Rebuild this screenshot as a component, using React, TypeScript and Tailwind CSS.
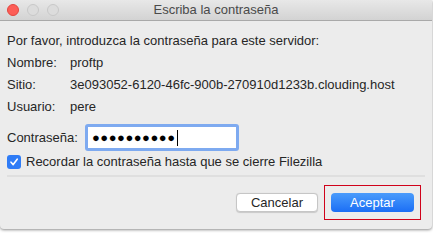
import React from "react";

const font = { fontFamily: '"Helvetica Neue", "Liberation Sans", Arial, sans-serif' };

function Row({ label, value }: { label: string; value: string }) {
  return (
    <div className="flex h-[22px] items-center">
      <span className="w-[63px] shrink-0">{label}</span>
      <span className="whitespace-nowrap">{value}</span>
    </div>
  );
}

export default function App() {
  return (
    <div className="h-[233px] w-[433px] overflow-hidden bg-white" style={font}>
      <div className="flex h-[229px] w-[432px] flex-col rounded-b-[4px] bg-[#ececec] text-[13px] text-[#262626] shadow-[0_1px_3px_rgba(0,0,0,0.45)]">
        {/* title bar */}
        <div className="relative flex h-[21px] shrink-0 items-center justify-center border-b border-[#a9a9a9] bg-gradient-to-b from-[#e8e8e8] to-[#d3d3d3]">
          <div className="absolute left-[7px] top-[4px] flex gap-[8px]">
            <span className="h-[12px] w-[12px] rounded-full border border-[#e2463f] bg-[#fd5d56]" />
            <span className="h-[12px] w-[12px] rounded-full border border-[#c8c8c8] bg-[#dcdcdc]" />
            <span className="h-[12px] w-[12px] rounded-full border border-[#c8c8c8] bg-[#dcdcdc]" />
          </div>
          <span className="text-[13px] text-[#4a4a4a]">Escriba la contraseña</span>
        </div>

        {/* body */}
        <div className="flex flex-col px-[7px] pt-[9px]">
          <div className="h-[22px] leading-[22px]">Por favor, introduzca la contraseña para este servidor:</div>
          <Row label="Nombre:" value="proftp" />
          <Row label="Sitio:" value="3e093052-6120-46fc-900b-270910d1233b.clouding.host" />
          <Row label="Usuario:" value="pere" />

          <div className="mt-[6px] flex items-center">
            <span className="w-[78px] shrink-0">Contraseña:</span>
            <div className="rounded-[3px] bg-[#7eaaf0] p-[3px]">
              <div className="flex h-[21px] w-[148px] items-center bg-white pl-[4px]">
                <span className="text-[13px] leading-none tracking-[0.5px] text-black">●●●●●●●●●●</span>
                <span className="ml-[1px] h-[16px] w-[1px] bg-black" />
              </div>
            </div>
          </div>

          <div className="mt-[1px] flex items-center gap-[5px]">
            <span className="flex h-[14px] w-[14px] items-center justify-center rounded-[3px] bg-[#2f7cf6]">
              <svg width="10" height="10" viewBox="0 0 10 10">
                <path d="M2 5.2 L4.2 7.6 L8.2 2.2" fill="none" stroke="white" strokeWidth="1.6" strokeLinecap="round" strokeLinejoin="round" />
              </svg>
            </span>
            <span>Recordar la contraseña hasta que se cierre Filezilla</span>
          </div>

          <div className="mt-[3px] h-[2px] bg-[#dfdfdf]" />
        </div>

        {/* buttons */}
        <div className="flex justify-end gap-[6px] pr-[11px] pt-[8px]">
          <button className="mt-[8px] h-[19px] w-[82px] rounded-[4px] border border-[#c6c6c6] bg-white text-[13px] leading-none text-[#262626] shadow-[0_0.5px_1px_rgba(0,0,0,0.15)]">
            Cancelar
          </button>
          <div className="border border-[#d0021b] px-[6px] py-[7px]">
            <button className="h-[19px] w-[83px] rounded-[4px] bg-gradient-to-b from-[#4a9bfb] to-[#1b6ef5] text-[13px] leading-none text-white">
              Aceptar
            </button>
          </div>
        </div>
      </div>
    </div>
  );
}
